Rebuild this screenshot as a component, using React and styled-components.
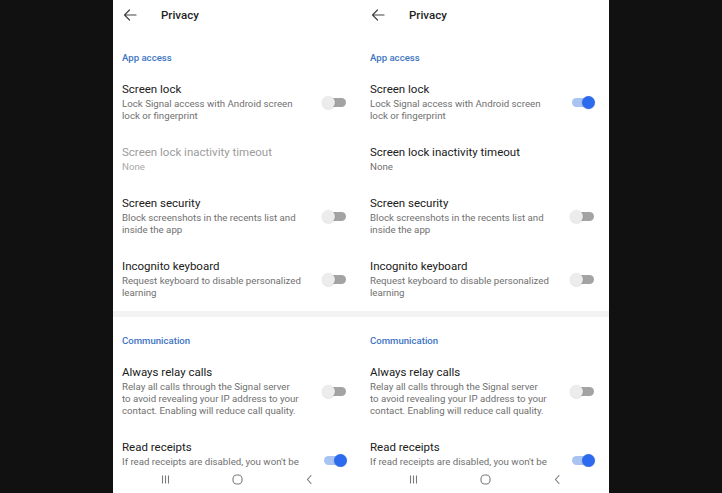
import styled, { createGlobalStyle } from 'styled-components';

const GlobalStyle = createGlobalStyle`
    html, body {
        margin: 0;
        padding: 0;
        background: #111111;
    }
    body {
        font-family: Roboto, "Noto Sans", "Liberation Sans", sans-serif;
        -webkit-font-smoothing: antialiased;
    }
`;

const Stage = styled.main`
    width: 722px;
    height: 493px;
    display: flex;
    justify-content: center;
    background: #111111;
    overflow: hidden;
`;

const Phone = styled.section`
    width: 248px;
    height: 493px;
    background: #ffffff;
    display: flex;
    flex-direction: column;
    overflow: hidden;
`;

const Header = styled.header`
    height: 29px;
    flex: none;
    display: flex;
    align-items: center;
    padding-left: 10px;
`;

const BackButton = styled.span`
    width: 14px;
    height: 14px;
    display: flex;
    align-items: center;
    margin-right: 24px;
`;

const Title = styled.h1`
    margin: 0;
    font-size: 11.5px;
    font-weight: 500;
    color: #1e1e1e;
`;

const Content = styled.div`
    flex: 1;
    overflow: hidden;
`;

const Category = styled.h2`
    margin: 0;
    padding: ${p => p.$top}px 9px 6px;
    font-size: 9.6px;
    line-height: 14px;
    font-weight: 500;
    color: #3d74c2;
`;

const Divider = styled.div`
    height: 6px;
    background: #f3f3f3;
`;

const Row = styled.div`
    display: flex;
    align-items: center;
    padding: 11px 15px 12px 9px;
`;

const Texts = styled.div`
    flex: 1;
    min-width: 0;
    padding-right: 12px;
    min-height: ${p => 16 + 12 * (p.$minLines || 0)}px;
`;

const RowTitle = styled.div`
    font-size: 11.5px;
    line-height: 14px;
    margin-bottom: 2px;
    color: ${p => (p.$disabled ? '#9c9c9c' : '#202020')};
`;

const RowSub = styled.div`
    font-size: 9.7px;
    line-height: 12px;
    color: ${p => (p.$disabled ? '#a8a8a8' : '#707070')};
`;

const Track = styled.span`
    position: relative;
    flex: none;
    width: 22px;
    height: 9px;
    border-radius: 5px;
    margin-left: 2px;
    background: ${p => (p.$on ? '#a9c3f2' : '#a3a3a3')};
`;

const Thumb = styled.span`
    position: absolute;
    top: -2px;
    left: ${p => (p.$on ? '10px' : '-2px')};
    width: 13px;
    height: 13px;
    border-radius: 50%;
    background: ${p => (p.$on ? '#2c6bed' : '#ececec')};
    box-shadow: 0 0.5px 1.5px rgba(0, 0, 0, 0.18);
`;

const NavBar = styled.nav`
    height: 24px;
    flex: none;
    background: #ffffff;
    display: flex;
    align-items: center;
    justify-content: center;
    gap: 61px;
    padding-bottom: 2px;
`;

const NavIcon = styled.svg`
    width: 11px;
    height: 11px;
    color: #7a7a7a;
`;

const BackArrow = () => (
    <svg width="14" height="12" viewBox="0 0 14 12" fill="none" stroke="#444" strokeWidth="1.2" strokeLinecap="round" strokeLinejoin="round">
        <path d="M13 6H1.5M6.5 1L1.5 6l5 5" />
    </svg>
);

const Toggle = ({on}) => (
    <Track $on={on}>
        <Thumb $on={on} />
    </Track>
);

const Setting = ({title, lines, toggle, on, disabled, minLines}) => (
    <Row>
        <Texts $minLines={minLines}>
            <RowTitle $disabled={disabled}>{title}</RowTitle>
            {lines.map(line => <RowSub key={line} $disabled={disabled}>{line}</RowSub>)}
        </Texts>
        {toggle && <Toggle on={on} />}
    </Row>
);

const Screen = ({lockOn}) => (
    <Phone>
        <Header>
            <BackButton><BackArrow /></BackButton>
            <Title>Privacy</Title>
        </Header>
        <Content>
            <Category $top={22}>App access</Category>
            <Setting title="Screen lock" lines={['Lock Signal access with Android screen', 'lock or fingerprint']} toggle on={lockOn} />
            <Setting title="Screen lock inactivity timeout" lines={['None']} disabled={!lockOn} />
            <Setting title="Screen security" lines={['Block screenshots in the recents list and', 'inside the app']} toggle />
            <Setting title="Incognito keyboard" lines={['Request keyboard to disable personalized', 'learning']} toggle />
            <Divider />
            <Category $top={17}>Communication</Category>
            <Setting
                title="Always relay calls"
                lines={['Relay all calls through the Signal server', 'to avoid revealing your IP address to your', 'contact. Enabling will reduce call quality.']}
                toggle
            />
            <Setting title="Read receipts" lines={["If read receipts are disabled, you won't be"]} toggle on minLines={2} />
        </Content>
        <NavBar>
            <NavIcon viewBox="0 0 11 11" fill="none" stroke="currentColor" strokeWidth="1.1">
                <path d="M2.5 1.5v8M5.5 1.5v8M8.5 1.5v8" />
            </NavIcon>
            <NavIcon viewBox="0 0 11 11" fill="none" stroke="currentColor" strokeWidth="1.1">
                <rect x="1" y="1" width="9" height="9" rx="3.8" />
            </NavIcon>
            <NavIcon viewBox="0 0 11 11" fill="none" stroke="currentColor" strokeWidth="1.1" strokeLinecap="round">
                <path d="M7 1.5L3.5 5.5 7 9.5" />
            </NavIcon>
        </NavBar>
    </Phone>
);

const App = () => (
    <>
        <GlobalStyle />
        <Stage>
            <Screen lockOn={false} />
            <Screen lockOn />
        </Stage>
    </>
);

export default App;
